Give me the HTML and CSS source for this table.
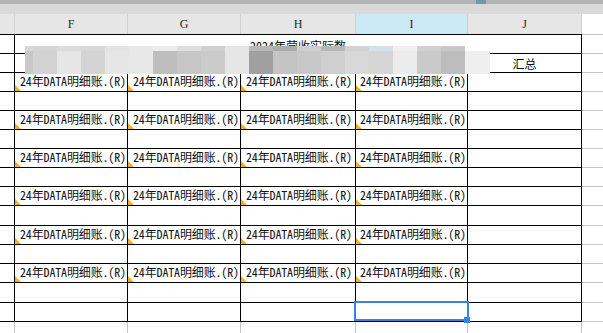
FILE: index.html
```html
<!DOCTYPE html>
<html lang="zh">
<head>
<meta charset="utf-8">
<title>2024年营收实际数</title>
<link rel="stylesheet" href="styles.css">
</head>
<body>
<div class="page">
  <div class="topbar"><span class="thumb"></span></div>
  <div class="band"></div>
  <div class="colhead">
    <div class="h"></div>
    <div class="h">F</div>
    <div class="h">G</div>
    <div class="h">H</div>
    <div class="h hsel">I</div>
    <div class="h">J</div>
    <div class="h hx"></div>
  </div>
  <div class="sheet">
    <div class="row r20 first">
      <div class="c"></div>
      <div class="c span5 title">2024年营收实际数</div>
      <div class="c cx"></div>
    </div>
    <div class="row r19">
      <div class="c"></div>
      <div class="c span4"></div>
      <div class="c center">汇总</div>
      <div class="c cx"></div>
    </div>
    <div class="row r19">
      <div class="c"></div>
      <div class="c t">24年DATA明细账.(R)</div>
      <div class="c t">24年DATA明细账.(R)</div>
      <div class="c t">24年DATA明细账.(R)</div>
      <div class="c t ti">24年DATA明细账.(R)</div>
      <div class="c"></div>
      <div class="c cx"></div>
    </div>
    <div class="row r19">
      <div class="c"></div><div class="c"></div><div class="c"></div><div class="c"></div><div class="c"></div><div class="c"></div><div class="c cx"></div>
    </div>
    <div class="row r19">
      <div class="c"></div>
      <div class="c t">24年DATA明细账.(R)</div>
      <div class="c t">24年DATA明细账.(R)</div>
      <div class="c t">24年DATA明细账.(R)</div>
      <div class="c t ti">24年DATA明细账.(R)</div>
      <div class="c"></div>
      <div class="c cx"></div>
    </div>
    <div class="row r19">
      <div class="c"></div><div class="c"></div><div class="c"></div><div class="c"></div><div class="c"></div><div class="c"></div><div class="c cx"></div>
    </div>
    <div class="row r19">
      <div class="c"></div>
      <div class="c t">24年DATA明细账.(R)</div>
      <div class="c t">24年DATA明细账.(R)</div>
      <div class="c t">24年DATA明细账.(R)</div>
      <div class="c t ti">24年DATA明细账.(R)</div>
      <div class="c"></div>
      <div class="c cx"></div>
    </div>
    <div class="row r19">
      <div class="c"></div><div class="c"></div><div class="c"></div><div class="c"></div><div class="c"></div><div class="c"></div><div class="c cx"></div>
    </div>
    <div class="row r19">
      <div class="c"></div>
      <div class="c t">24年DATA明细账.(R)</div>
      <div class="c t">24年DATA明细账.(R)</div>
      <div class="c t">24年DATA明细账.(R)</div>
      <div class="c t ti">24年DATA明细账.(R)</div>
      <div class="c"></div>
      <div class="c cx"></div>
    </div>
    <div class="row r20">
      <div class="c"></div><div class="c"></div><div class="c"></div><div class="c"></div><div class="c"></div><div class="c"></div><div class="c cx"></div>
    </div>
    <div class="row r19">
      <div class="c"></div>
      <div class="c t">24年DATA明细账.(R)</div>
      <div class="c t">24年DATA明细账.(R)</div>
      <div class="c t">24年DATA明细账.(R)</div>
      <div class="c t ti">24年DATA明细账.(R)</div>
      <div class="c"></div>
      <div class="c cx"></div>
    </div>
    <div class="row r19">
      <div class="c"></div><div class="c"></div><div class="c"></div><div class="c"></div><div class="c"></div><div class="c"></div><div class="c cx"></div>
    </div>
    <div class="row r19">
      <div class="c"></div>
      <div class="c t">24年DATA明细账.(R)</div>
      <div class="c t">24年DATA明细账.(R)</div>
      <div class="c t">24年DATA明细账.(R)</div>
      <div class="c t ti">24年DATA明细账.(R)</div>
      <div class="c"></div>
      <div class="c cx"></div>
    </div>
    <div class="row r20">
      <div class="c"></div><div class="c"></div><div class="c"></div><div class="c"></div><div class="c"></div><div class="c"></div><div class="c cx"></div>
    </div>
    <div class="row r19">
      <div class="c"></div><div class="c"></div><div class="c"></div><div class="c"></div><div class="c sel"><span class="handle"></span></div><div class="c"></div><div class="c cx"></div>
    </div>
    <div class="row r19 last">
      <div class="c"></div><div class="c"></div><div class="c"></div><div class="c"></div><div class="c"></div><div class="c"></div><div class="c cx"></div>
    </div>
  </div>

  <div class="mosaic">
    <div class="strip s-top">
      <i class="b8 g-d9"></i><i class="g-d4"></i><i class="g-dc"></i><i class="g-d8"></i><i class="g-e4"></i><i class="g-e8"></i><i class="g-ec"></i><i class="g-de"></i><i class="g-d0"></i><i class="g-e6"></i><i class="g-b8"></i><i class="g-ac"></i><i class="g-cf"></i><i class="g-b8"></i><i class="g-d2"></i><i class="g-bl"></i><i class="g-f0"></i><i class="g-d0"></i><i class="g-c8"></i><i class="b25 g-no"></i>
    </div>
    <div class="strip s-main">
      <i class="b8 g-c8"></i><i class="g-d2"></i><i class="g-e6"></i><i class="g-d4"></i><i class="g-e6"></i><i class="g-e8"></i><i class="g-be"></i><i class="g-c6"></i><i class="g-cb"></i><i class="g-e6"></i><i class="g-a0"></i><i class="g-c4"></i><i class="g-c8"></i><i class="g-cf"></i><i class="g-d8"></i><i class="g-d6"></i><i class="g-ec"></i><i class="g-ca"></i><i class="g-bd"></i><i class="b25 g-ef"></i>
    </div>
  </div>
</div>
</body>
</html>
```

FILE: styles.css
```css
* { box-sizing: border-box; }
html, body { margin: 0; padding: 0; background: #fff; }
.page {
  position: relative;
  width: 603px;
  height: 333px;
  overflow: hidden;
  background: #fff;
  font-family: "Noto Sans CJK SC", "Noto Sans", sans-serif;
}
.topbar { height: 4px; background: #b3b3b3; display: flex; }
.thumb { display: block; width: 10px; height: 4px; margin-left: 476px; background: #6f9aa6; }
.band { height: 10px; background: #d9d9d9; }

.colhead, .row {
  display: grid;
  grid-template-columns: 15px 113px 113px 115px 112px 114px 1fr;
}
.colhead { height: 20px; }
.h {
  background: #e6e6e6;
  border-right: 1px solid #d0d0d0;
  font-family: "Liberation Serif", "DejaVu Serif", serif;
  font-size: 12px;
  line-height: 20px;
  text-align: center;
  color: #2a2a2a;
}
.hsel { background: #cce9f6; }
.hx { background: #fff; border-right: none; }

.r19 { height: 19px; }
.r20 { height: 20px; }

.c {
  position: relative;
  border-right: 1px solid #000;
  border-bottom: 1px solid #000;
  overflow: hidden;
  white-space: nowrap;
  font-size: 12px;
  line-height: 15px;
  padding-left: 5px;
  color: #111;
  font-feature-settings: "hwid";
}
.t { letter-spacing: -0.15px; }
.ti { padding-left: 4px; }
.cx { border-right: none; border-bottom-color: #c6c6c6; }
.first .c { border-top: 1px solid #000; }
.first .cx { border-top-color: #c6c6c6; }
.last .c { border-right-color: #c6c6c6; border-bottom: none; }

.span5 { grid-column: span 5; }
.span4 { grid-column: span 4; }
.title { text-align: center; padding: 3px 0 0; }
.center { text-align: center; padding: 1px 0 0; line-height: 17px; }

.t::before {
  content: "";
  position: absolute;
  left: 0;
  bottom: 0;
  width: 6px;
  height: 6px;
  background: #f5b01a;
  clip-path: polygon(0 0, 0 100%, 100% 100%);
}

.sel { overflow: visible; z-index: 2; }
.sel::after {
  content: "";
  position: absolute;
  left: -2px;
  top: -2px;
  right: -2px;
  bottom: 0;
  border: 2px solid #3b82e6;
}
.handle {
  position: absolute;
  right: -3px;
  bottom: -2px;
  width: 6px;
  height: 6px;
  background: #3b82e6;
  z-index: 3;
}

.mosaic {
  position: absolute;
  left: 25px;
  top: 46px;
  width: 465px;
  z-index: 5;
}
.strip { display: flex; }
.s-top { height: 5px; }
.s-main { height: 23px; }
.strip i { display: block; width: 24px; flex: none; }
.strip i.b8 { width: 8px; }
.strip i.b25 { width: 25px; }
.g-no { background: transparent; }
.g-a0 { background: #a0a0a0; }
.g-ac { background: #acacac; }
.g-b8 { background: #b8b8b8; }
.g-bd { background: #bdbdbd; }
.g-be { background: #bebebe; }
.g-bl { background: #d5e2e8; }
.g-c4 { background: #c4c4c4; }
.g-c6 { background: #c6c6c6; }
.g-c8 { background: #c8c8c8; }
.g-ca { background: #cacaca; }
.g-cb { background: #cbcbcb; }
.g-cf { background: #cfcfcf; }
.g-d0 { background: #d0d0d0; }
.g-d2 { background: #d2d2d2; }
.g-d4 { background: #d4d4d4; }
.g-d6 { background: #d6d6d6; }
.g-d8 { background: #d8d8d8; }
.g-d9 { background: #d9d9d9; }
.g-dc { background: #dcdcdc; }
.g-de { background: #dedede; }
.g-e4 { background: #e4e4e4; }
.g-e6 { background: #e6e6e6; }
.g-e8 { background: #e8e8e8; }
.g-ec { background: #ececec; }
.g-ef { background: #efefef; }
.g-f0 { background: #f0f0f0; }
```
